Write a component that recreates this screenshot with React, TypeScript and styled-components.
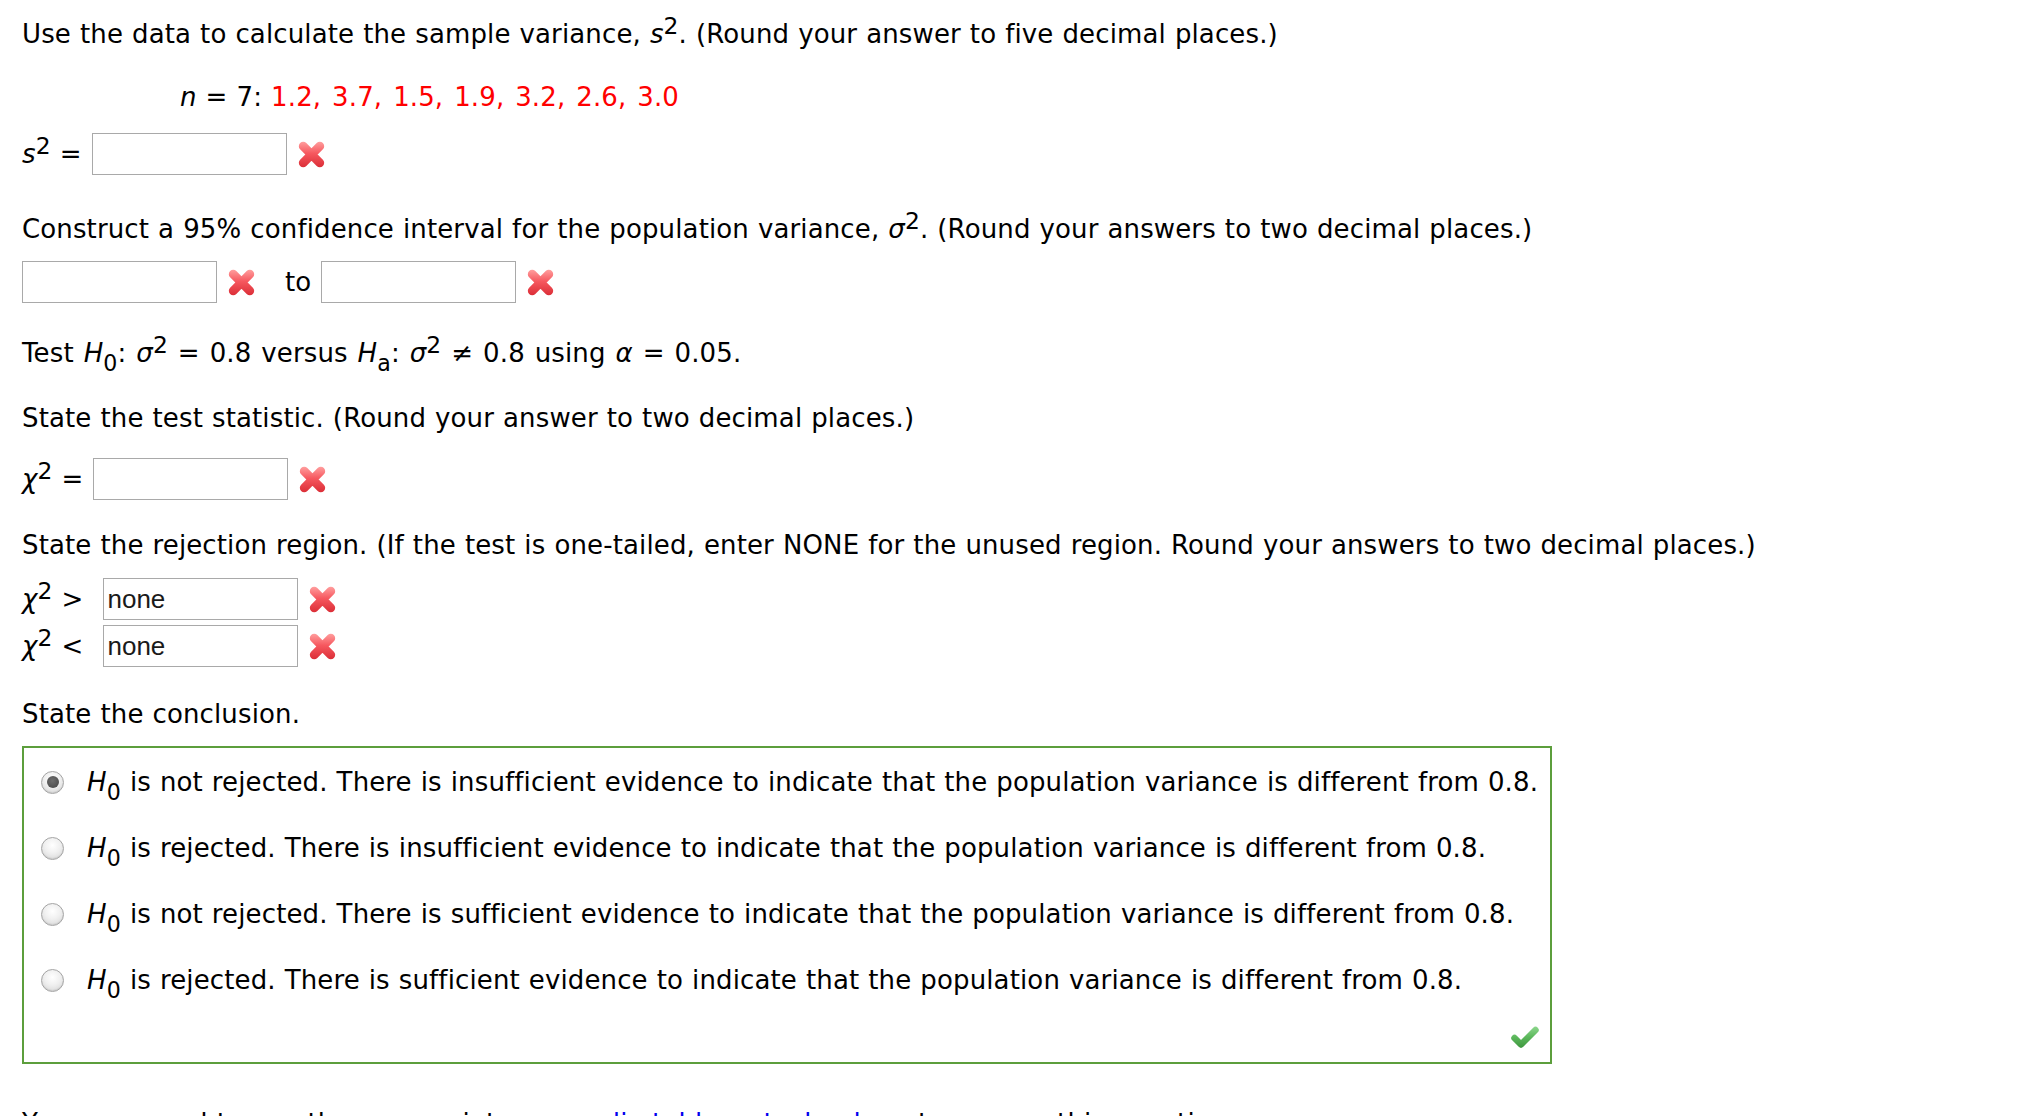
import { useId } from 'react'
import styled, { createGlobalStyle } from 'styled-components'

const GlobalStyle = createGlobalStyle`
  body {
    margin: 0;
    background: #fff;
    color: #000;
    font-family: "DejaVu Sans", Verdana, sans-serif;
    font-size: 26px;
    letter-spacing: 0.13px;
    word-spacing: 0.6px;
  }
`

const Page = styled.div`
  padding: 18px 22px 0;
`

const Line = styled.div<{ $top?: number; $indent?: number }>`
  margin-top: ${p => p.$top ?? 0}px;
  padding-left: ${p => p.$indent ?? 0}px;
  line-height: 32px;
  white-space: nowrap;
`

const Var = styled.i`
  font-style: italic;
`

const Sup = styled.sup`
  font-size: 0.9em;
  vertical-align: 0.4em;
  line-height: 0;
`

const Sub = styled.sub`
  font-size: 0.85em;
  vertical-align: -0.42em;
  line-height: 0;
`

const Data = styled.span`
  color: #ff0000;
  word-spacing: 2.5px;
`

const MathLine = styled(Line)`
  word-spacing: 1.5px;
`

const AnswerRow = styled.div<{ $top?: number }>`
  margin-top: ${p => p.$top ?? 0}px;
  display: flex;
  align-items: center;
  height: 42px;
  white-space: nowrap;
`

const Label = styled.span<{ $gap: number }>`
  margin-right: ${p => p.$gap}px;
  line-height: 32px;
`

const AnswerInput = styled.input`
  box-sizing: border-box;
  width: 195px;
  height: 42px;
  margin: 0;
  padding: 0 3px;
  border: 1px solid #a9a9a9;
  background: #fff;
  font-family: "Liberation Sans", Arial, sans-serif;
  font-size: 26px;
  color: #1a1a1a;
  outline: none;
`

const MarkSlot = styled.span<{ $after?: number }>`
  display: inline-flex;
  margin-left: 10px;
  margin-right: ${p => p.$after ?? 0}px;
`

const Word = styled.span`
  margin-right: 10px;
  line-height: 32px;
`

const ConclusionBox = styled.div`
  box-sizing: border-box;
  margin-top: 16px;
  width: 1530px;
  height: 318px;
  border: 2px solid #5c9e3c;
  padding: 18px 10px 12px 17px;
  display: flex;
  flex-direction: column;
`

const Options = styled.div`
  display: flex;
  flex-direction: column;
  gap: 34px;
`

const Option = styled.label`
  display: flex;
  align-items: center;
  height: 32px;
  line-height: 32px;
  white-space: nowrap;
`

const Radio = styled.span<{ $checked?: boolean }>`
  box-sizing: border-box;
  width: 23px;
  height: 23px;
  margin-right: 23px;
  border-radius: 50%;
  border: 1px solid #a4a4a4;
  background: radial-gradient(circle at 50% 35%, #ffffff 0%, #f0f0f0 45%, #d2d2d2 100%);
  box-shadow: inset 0 -1px 1px rgba(0, 0, 0, 0.08);
  display: flex;
  align-items: center;
  justify-content: center;
  flex-shrink: 0;

  &::after {
    content: '';
    display: ${p => (p.$checked ? 'block' : 'none')};
    width: 12px;
    height: 12px;
    border-radius: 50%;
    background: radial-gradient(circle at 45% 40%, #6e6e6e 0%, #444 100%);
  }
`

const CheckRow = styled.div`
  margin-top: auto;
  display: flex;
  justify-content: flex-end;
`

const Link = styled.span`
  color: #0000ee;
`

const WrongMark = () => {
  const id = useId()
  return (
    <svg width="29" height="29" viewBox="0 0 28 28">
      <defs>
        <linearGradient id={id} x1="0" y1="2" x2="0" y2="26" gradientUnits="userSpaceOnUse">
          <stop offset="0" stopColor="#ff9c9c" />
          <stop offset="0.45" stopColor="#f6585f" />
          <stop offset="1" stopColor="#dc2f38" />
        </linearGradient>
      </defs>
      <path d="M6 6 L22 22 M22 6 L6 22" stroke={`url(#${id})`} strokeWidth="8.5" strokeLinecap="round" fill="none" />
    </svg>
  )
}

const RightMark = () => {
  const id = useId()
  return (
    <svg width="30" height="26" viewBox="0 0 30 26">
      <defs>
        <linearGradient id={id} x1="0" y1="2" x2="0" y2="24" gradientUnits="userSpaceOnUse">
          <stop offset="0" stopColor="#8fd88f" />
          <stop offset="0.5" stopColor="#5cb85c" />
          <stop offset="1" stopColor="#3e963e" />
        </linearGradient>
      </defs>
      <path d="M4.5 14 L11 20.5 L25.5 6" stroke={`url(#${id})`} strokeWidth="6.5" strokeLinecap="round" strokeLinejoin="round" fill="none" />
    </svg>
  )
}

const H0 = () => (
  <>
    <Var>H</Var>
    <Sub>0</Sub>
  </>
)

const conclusions = [
  'is not rejected. There is insufficient evidence to indicate that the population variance is different from 0.8.',
  'is rejected. There is insufficient evidence to indicate that the population variance is different from 0.8.',
  'is not rejected. There is sufficient evidence to indicate that the population variance is different from 0.8.',
  'is rejected. There is sufficient evidence to indicate that the population variance is different from 0.8.',
]

const App = () => {
  return (
    <Page>
      <GlobalStyle />
      <Line>
        Use the data to calculate the sample variance, <Var>s</Var>
        <Sup>2</Sup>. (Round your answer to five decimal places.)
      </Line>
      <Line $top={31} $indent={158}>
        <Var>n</Var> = 7: <Data>1.2, 3.7, 1.5, 1.9, 3.2, 2.6, 3.0</Data>
      </Line>
      <AnswerRow $top={20}>
        <Label $gap={10}>
          <Var>s</Var>
          <Sup>2</Sup> =
        </Label>
        <AnswerInput />
        <MarkSlot>
          <WrongMark />
        </MarkSlot>
      </AnswerRow>

      <Line $top={38}>
        Construct a 95% confidence interval for the population variance, <Var>σ</Var>
        <Sup>2</Sup>. (Round your answers to two decimal places.)
      </Line>
      <AnswerRow $top={16}>
        <AnswerInput />
        <MarkSlot $after={29}>
          <WrongMark />
        </MarkSlot>
        <Word>to</Word>
        <AnswerInput />
        <MarkSlot>
          <WrongMark />
        </MarkSlot>
      </AnswerRow>

      <MathLine $top={34}>
        Test <H0 />: <Var>σ</Var>
        <Sup>2</Sup> = 0.8 versus <Var>H</Var>
        <Sub>a</Sub>: <Var>σ</Var>
        <Sup>2</Sup> ≠ 0.8 using <Var>α</Var> = 0.05.
      </MathLine>
      <Line $top={33}>State the test statistic. (Round your answer to two decimal places.)</Line>
      <AnswerRow $top={24}>
        <Label $gap={10}>
          <Var>χ</Var>
          <Sup>2</Sup> =
        </Label>
        <AnswerInput />
        <MarkSlot>
          <WrongMark />
        </MarkSlot>
      </AnswerRow>

      <Line $top={29}>
        State the rejection region. (If the test is one-tailed, enter NONE for the unused region. Round your answers to
        two decimal places.)
      </Line>
      <AnswerRow $top={17}>
        <Label $gap={20}>
          <Var>χ</Var>
          <Sup>2</Sup> &gt;
        </Label>
        <AnswerInput defaultValue="none" />
        <MarkSlot>
          <WrongMark />
        </MarkSlot>
      </AnswerRow>
      <AnswerRow $top={5}>
        <Label $gap={20}>
          <Var>χ</Var>
          <Sup>2</Sup> &lt;
        </Label>
        <AnswerInput defaultValue="none" />
        <MarkSlot>
          <WrongMark />
        </MarkSlot>
      </AnswerRow>

      <Line $top={31}>State the conclusion.</Line>
      <ConclusionBox>
        <Options>
          {conclusions.map((text, i) => (
            <Option key={i}>
              <Radio $checked={i === 0} />
              <span>
                <H0 /> {text}
              </span>
            </Option>
          ))}
        </Options>
        <CheckRow>
          <RightMark />
        </CheckRow>
      </ConclusionBox>

      <Line $top={43}>
        You may need to use the appropriate <Link>appendix table or technology</Link> to answer this question.
      </Line>
    </Page>
  )
}

export default App
